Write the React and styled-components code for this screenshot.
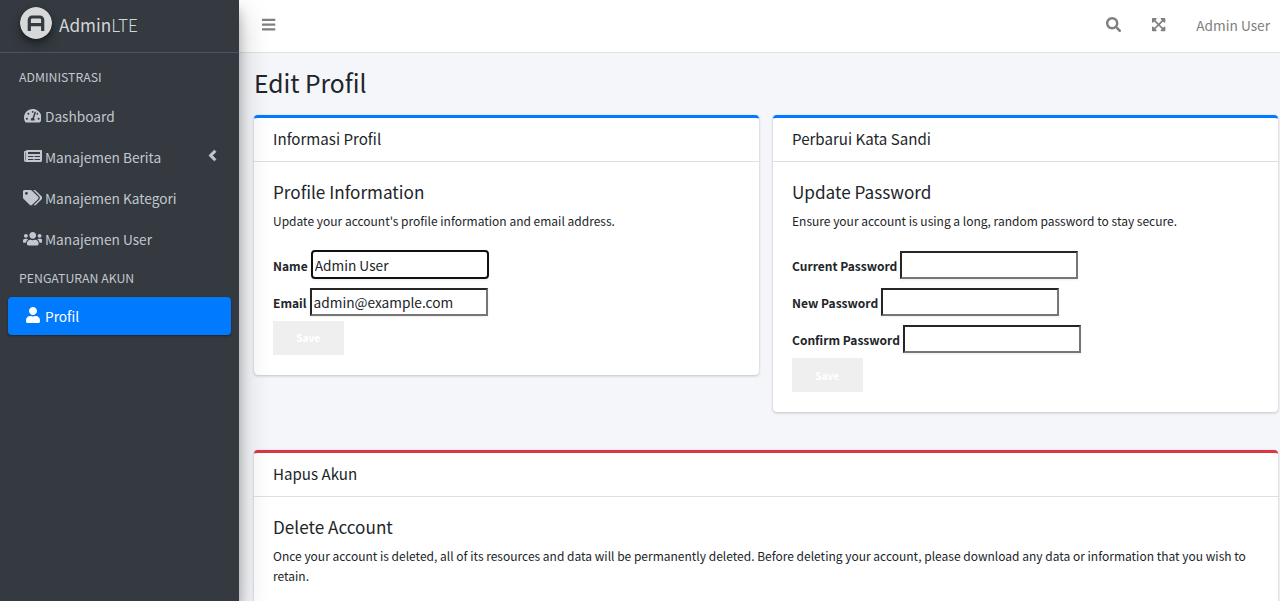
import React from "react";
import styled, { createGlobalStyle } from "styled-components";
import {
  FaTachometerAlt,
  FaNewspaper,
  FaTags,
  FaUsers,
  FaUser,
  FaAngleLeft,
  FaBars,
  FaSearch,
  FaExpandArrowsAlt,
} from "react-icons/fa";

const Global = createGlobalStyle`
  *, *::before, *::after { box-sizing: border-box; }
  body {
    margin: 0;
    overflow: hidden;
    background: #f4f6f9;
    color: #212529;
    font-family: "Noto Sans CJK SC", "Source Sans Pro", sans-serif;
    font-size: 13.7px;
    line-height: 20px;
  }
`;

const Shell = styled.div`
  display: flex;
  width: 1280px;
  height: 601px;
  overflow: hidden;
`;

const Sidebar = styled.aside`
  position: relative;
  z-index: 2;
  flex: 0 0 239px;
  background: #343a40;
  color: #c2c7d0;
  box-shadow: 0 14px 28px rgba(0, 0, 0, 0.25), 0 10px 10px rgba(0, 0, 0, 0.22);
`;

const Brand = styled.div`
  display: flex;
  align-items: center;
  height: 52.5px;
  padding: 0 0 5px 20px;
  border-bottom: 1px solid #4b545c;
  font-size: 17.2px;
  color: #d3d5d7;
`;

const BrandLogo = styled.svg`
  width: 32px;
  height: 32px;
  margin-right: 7px;
  border-radius: 50%;
  box-shadow: 0 6px 12px rgba(0, 0, 0, 0.3), 0 3px 4px rgba(0, 0, 0, 0.25);
`;

const BrandText = styled.span`
  padding-top: 4px;
`;

const Light = styled.span`
  font-weight: 300;
`;

const Nav = styled.nav`
  display: flex;
  flex-direction: column;
  padding: 8px 8px 0;
`;

const NavHeader = styled.div`
  height: 36px;
  padding: ${(p) => (p.$first ? 6 : 7)}px 11px 0;
  font-size: 12.3px;
  line-height: 20px;
`;

const NavItem = styled.a`
  display: flex;
  align-items: center;
  height: 38px;
  margin-bottom: 3px;
  padding: 0 14px;
  border-radius: 4px;
  color: ${(p) => (p.$active ? "#fff" : "#c2c7d0")};
  background: ${(p) => (p.$active ? "#007bff" : "transparent")};
  box-shadow: ${(p) => (p.$active ? "0 1px 3px rgba(0,0,0,.12), 0 1px 2px rgba(0,0,0,.24)" : "none")};
`;

const NavIcon = styled.span`
  display: flex;
  justify-content: center;
  flex: 0 0 21px;
  margin-right: 2px;
  padding-bottom: 0.5px;
  font-size: ${(p) => p.$size}px;
`;

const NavArrow = styled.span`
  display: flex;
  margin-left: auto;
  margin-right: -4px;
  padding-bottom: 3px;
  font-size: 17px;
`;

const Main = styled.div`
  flex: 1;
  min-width: 0;
`;

const TopBar = styled.header`
  display: flex;
  align-items: center;
  height: 52.5px;
  padding: 0 10px 2px 22px;
  background: #fff;
  border-bottom: 1px solid #dee2e6;
  color: #808080;
`;

const BarIcon = styled.span`
  display: flex;
  font-size: 15.3px;
  margin-right: ${(p) => p.$gap}px;
`;

const UserLink = styled.a`
  padding-top: 1px;
`;

const Spacer = styled.div`
  flex: 1;
`;

const Content = styled.main`
  padding: 11px 2px 0 15px;
`;

const PageTitle = styled.h1`
  margin: 0 0 15.3px;
  font-size: 24.6px;
  font-weight: 400;
  line-height: 36px;
`;

const CardRow = styled.div`
  display: flex;
  align-items: flex-start;
  gap: 14px;
  height: 335.5px;
`;

const Card = styled.section`
  flex: 1;
  background: #fff;
  border-top: 3px solid ${(p) => p.$accent};
  border-radius: 4px;
  box-shadow: 0 0 1px rgba(0, 0, 0, 0.125), 0 1px 3px rgba(0, 0, 0, 0.2);
`;

const CardHeader = styled.div`
  height: 44px;
  padding: 9px 19px 0;
  border-bottom: 1px solid rgba(0, 0, 0, 0.125);
  font-size: 15.1px;
  line-height: 22px;
`;

const CardBody = styled.div`
  padding: 19px 19px 19.5px;
`;

const SectionTitle = styled.h2`
  margin: 0 0 8px;
  font-size: 17.15px;
  font-weight: 400;
  line-height: 22px;
`;

const Hint = styled.p`
  margin: 0 0 20.2px;
  font-size: 12px;
  line-height: 20px;
`;

const Field = styled.div`
  display: flex;
  align-items: center;
  gap: 3px;
  height: 28px;
  margin-bottom: ${(p) => (p.$last ? 4.6 : 9.1)}px;
`;

const Label = styled.label`
  padding-top: 2px;
  font-size: 12.03px;
  font-weight: 700;
  white-space: nowrap;
`;

const Input = styled.input`
  width: 178px;
  height: 28px;
  margin: 0;
  padding: 0 2px;
  border: 2px solid;
  border-color: #262626 #767676 #767676 #262626;
  background: #fff;
  color: #212529;
  font: inherit;
  font-size: 13.7px;
  box-shadow: 0 1px 2px rgba(0, 0, 0, 0.08);
  outline: none;
  ${(p) => p.$focused && "border-color: #101010; border-radius: 4px; height: 29px;"}
`;

const SaveButton = styled.button`
  display: block;
  width: 70.5px;
  height: 34.5px;
  padding: 1px 0 0;
  border: 0;
  background: #efefef;
  color: #fff;
  font: 700 10.2px/20px "Noto Sans CJK SC", sans-serif;
`;

const navItems = [
  { icon: FaTachometerAlt, label: "Dashboard", size: 17.5 },
  { icon: FaNewspaper, label: "Manajemen Berita", arrow: true, size: 18 },
  { icon: FaTags, label: "Manajemen Kategori", size: 19.5 },
  { icon: FaUsers, label: "Manajemen User", size: 19.5 },
];

function TextField({ label, last, ...input }) {
  return (
    <Field $last={last}>
      <Label>{label}</Label>
      <Input {...input} />
    </Field>
  );
}

export default function App() {
  return (
    <>
      <Global />
      <Shell>
        <Sidebar>
          <Brand>
            <BrandLogo viewBox="0 0 32 32">
              <circle cx="16" cy="16" r="16" fill="#d6d8d9" />
              <path
                d="M9.3 24V12.8a2.8 2.8 0 0 1 2.8-2.8h7.8a2.8 2.8 0 0 1 2.8 2.8V24M9.3 17.6h13.4"
                fill="none"
                stroke="#343a40"
                strokeWidth="3.2"
              />
            </BrandLogo>
            <BrandText>
              Admin<Light>LTE</Light>
            </BrandText>
          </Brand>
          <Nav>
            <NavHeader $first>ADMINISTRASI</NavHeader>
            {navItems.map(({ icon: Icon, label, arrow, size }) => (
              <NavItem key={label}>
                <NavIcon $size={size}>
                  <Icon />
                </NavIcon>
                {label}
                {arrow && (
                  <NavArrow>
                    <FaAngleLeft stroke="currentColor" strokeWidth="16" />
                  </NavArrow>
                )}
              </NavItem>
            ))}
            <NavHeader>PENGATURAN AKUN</NavHeader>
            <NavItem $active>
              <NavIcon $size={16}>
                <FaUser />
              </NavIcon>
              Profil
            </NavItem>
          </Nav>
        </Sidebar>
        <Main>
          <TopBar>
            <BarIcon $gap={0}>
              <FaBars />
            </BarIcon>
            <Spacer />
            <BarIcon $gap={30}>
              <FaSearch />
            </BarIcon>
            <BarIcon $gap={30}>
              <FaExpandArrowsAlt />
            </BarIcon>
            <UserLink>Admin User</UserLink>
          </TopBar>
          <Content>
            <PageTitle>Edit Profil</PageTitle>
            <CardRow>
              <Card $accent="#007bff">
                <CardHeader>Informasi Profil</CardHeader>
                <CardBody>
                  <SectionTitle>Profile Information</SectionTitle>
                  <Hint>Update your account's profile information and email address.</Hint>
                  <TextField label="Name" defaultValue="Admin User" $focused />
                  <TextField label="Email" defaultValue="admin@example.com" last />
                  <SaveButton>Save</SaveButton>
                </CardBody>
              </Card>
              <Card $accent="#007bff">
                <CardHeader>Perbarui Kata Sandi</CardHeader>
                <CardBody>
                  <SectionTitle>Update Password</SectionTitle>
                  <Hint>Ensure your account is using a long, random password to stay secure.</Hint>
                  <TextField label="Current Password" type="password" />
                  <TextField label="New Password" type="password" />
                  <TextField label="Confirm Password" type="password" last />
                  <SaveButton>Save</SaveButton>
                </CardBody>
              </Card>
            </CardRow>
            <Card $accent="#dc3545">
              <CardHeader>Hapus Akun</CardHeader>
              <CardBody>
                <SectionTitle>Delete Account</SectionTitle>
                <Hint>
                  Once your account is deleted, all of its resources and data will be permanently deleted. Before
                  deleting your account, please download any data or information that you wish to retain.
                </Hint>
              </CardBody>
            </Card>
          </Content>
        </Main>
      </Shell>
    </>
  );
}
